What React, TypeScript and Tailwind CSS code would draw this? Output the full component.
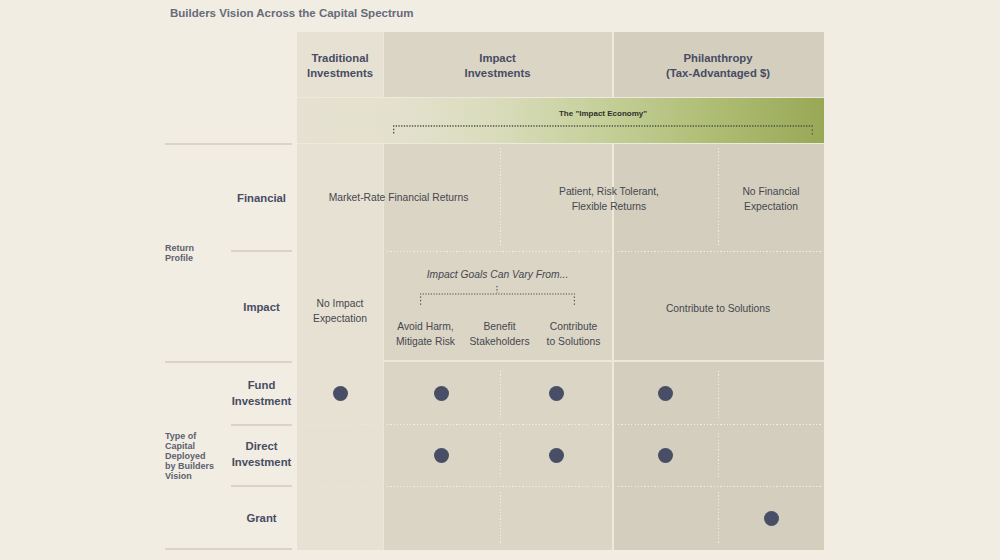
import React from "react";

// dotted rules used inside the chart body
const VDots: React.FC<{ className?: string }> = ({ className = "" }) => (
  <div
    className={`w-px justify-self-start bg-[repeating-linear-gradient(to_bottom,#f3efe5_0,#f3efe5_1.2px,transparent_1.2px,transparent_3.3px)] ${className}`}
  />
);

const HDots: React.FC<{ className?: string }> = ({ className = "" }) => (
  <div
    className={`h-px self-start bg-[repeating-linear-gradient(to_right,#f3efe5_0,#f3efe5_1.2px,transparent_1.2px,transparent_3.3px)] ${className}`}
  />
);

const Dot: React.FC<{ className?: string }> = ({ className = "" }) => (
  <div className={`flex items-center justify-center ${className}`}>
    <div className="h-[15px] w-[15px] rounded-full bg-[#484e66]" />
  </div>
);

const HeaderCell: React.FC<{ className?: string; children: React.ReactNode }> = ({
  className = "",
  children,
}) => (
  <div
    className={`row-start-1 flex items-center justify-center pt-[3px] text-center text-[11.3px] font-bold leading-[15px] text-[#474c63] ${className}`}
  >
    <div>{children}</div>
  </div>
);

const BodyText: React.FC<{ className?: string; children: React.ReactNode }> = ({
  className = "",
  children,
}) => (
  <div
    className={`flex items-center justify-center text-center text-[10.3px] leading-[15px] text-[#45474f] ${className}`}
  >
    <div>{children}</div>
  </div>
);

const RowLabel: React.FC<{ className?: string; children: React.ReactNode }> = ({
  className = "",
  children,
}) => (
  <div
    className={`flex items-center justify-center whitespace-nowrap text-center text-[11.3px] font-bold leading-[16px] text-[#474c63] ${className}`}
  >
    <div>{children}</div>
  </div>
);

const GroupLabel: React.FC<{ children: React.ReactNode }> = ({ children }) => (
  <div className="flex w-[66px] items-center text-[9px] font-bold leading-[10px] text-[#5c606f]">
    <div>{children}</div>
  </div>
);

const LeftLabels: React.FC = () => (
  <div className="mr-[5px] w-[127px] shrink-0">
    <div className="h-[111px]" />
    <div className="flex h-[218px] border-t-2 border-[#d9d4c6]">
      <GroupLabel>
        Return
        <br />
        Profile
      </GroupLabel>
      <div className="flex w-[61px] flex-col">
        <RowLabel className="h-[105px]">Financial</RowLabel>
        <RowLabel className="h-[111px] border-t-2 border-[#d9d4c6]">Impact</RowLabel>
      </div>
    </div>
    <div className="flex h-[189px] border-y-2 border-[#d9d4c6]">
      <GroupLabel>
        Type of
        <br />
        Capital
        <br />
        Deployed
        <br />
        by Builders
        <br />
        Vision
      </GroupLabel>
      <div className="flex w-[61px] flex-col">
        <RowLabel className="h-[61px] pb-[2px]">
          Fund
          <br />
          Investment
        </RowLabel>
        <RowLabel className="h-[61px] border-t-2 border-[#d9d4c6] pb-[3px]">
          Direct
          <br />
          Investment
        </RowLabel>
        <RowLabel className="h-[63px] border-t-2 border-[#d9d4c6]">Grant</RowLabel>
      </div>
    </div>
  </div>
);

const Chart: React.FC = () => (
  <div className="grid w-[527px] shrink-0 grid-cols-[86px_117px_112px_106px_106px] grid-rows-[65px_47px_107px_111px_62px_62px_64px]">
    {/* column fills */}
    <div className="col-start-1 col-end-2 row-start-1 row-end-8 bg-[#e6e1d3]" />
    <div className="col-start-2 col-end-4 row-start-1 row-end-8 border-l border-[#ece7da] bg-[#dbd5c6]" />
    <div className="col-start-4 col-end-6 row-start-1 row-end-8 border-l-2 border-[#eee9dc] bg-[#d4cebe]" />

    {/* header */}
    <HeaderCell className="col-start-1 col-end-2">
      Traditional
      <br />
      Investments
    </HeaderCell>
    <HeaderCell className="col-start-2 col-end-4">
      Impact
      <br />
      Investments
    </HeaderCell>
    <HeaderCell className="col-start-4 col-end-6">
      Philanthropy
      <br />
      (Tax-Advantaged $)
    </HeaderCell>

    {/* impact economy band */}
    <div className="col-start-1 col-end-6 row-start-2 border-y border-[#eee9dc] bg-[linear-gradient(to_right,#e6e1d1_0%,#e3e1cd_20%,#d9dcbb_38%,#c6d09b_57%,#adbc72_80%,#98a856_100%)] pl-[96px] pr-[11px] pt-[11px]">
      <div className="text-center text-[8px] font-bold leading-[10px] text-[#2f322b]">
        The "Impact Economy"
      </div>
      <svg width="420" height="14" className="mt-[3px] block">
        <g stroke="#4a4f42" strokeWidth="1.3" fill="none">
          <line x1="0" y1="4" x2="420" y2="4" strokeDasharray="1.3 1.4" />
          <line x1="0.7" y1="6.8" x2="0.7" y2="13" strokeDasharray="1.4 1.9" />
          <line x1="419.3" y1="7.4" x2="419.3" y2="13" strokeDasharray="1.4 2.4" />
        </g>
      </svg>
    </div>

    {/* financial row */}
    <BodyText className="col-start-1 col-end-3 row-start-3">Market-Rate Financial Returns</BodyText>
    <VDots className="col-start-3 row-start-3 my-[4px]" />
    <BodyText className="col-start-3 col-end-5 row-start-3 pt-[3px]">
      Patient, Risk Tolerant,
      <br />
      Flexible Returns
    </BodyText>
    <VDots className="col-start-5 row-start-3 my-[4px]" />
    <BodyText className="col-start-5 col-end-6 row-start-3 pt-[2px]">
      No Financial
      <br />
      Expectation
    </BodyText>

    {/* impact row */}
    <HDots className="col-start-2 col-end-4 row-start-4 ml-[4px] mr-[3px]" />
    <HDots className="col-start-4 col-end-6 row-start-4 ml-[6px] mr-[3px]" />
    <BodyText className="col-start-1 col-end-2 row-start-4 pt-[8px]">
      No Impact
      <br />
      Expectation
    </BodyText>
    <div className="col-start-2 col-end-4 row-start-4 flex flex-col items-center pt-[17px] text-[10.3px] text-[#45474f]">
      <div className="italic leading-[14px]">Impact Goals Can Vary From...</div>
      <svg width="155" height="22" className="mt-[3px] block">
        <g stroke="#4a4c55" strokeWidth="1.2" fill="none">
          <line x1="0" y1="9" x2="155" y2="9" strokeDasharray="1.2 1.5" />
          <line x1="77" y1="1" x2="77" y2="8" strokeDasharray="1.3 2" />
          <line x1="0.6" y1="11.5" x2="0.6" y2="20" strokeDasharray="1.3 2.2" />
          <line x1="154.4" y1="11.5" x2="154.4" y2="20" strokeDasharray="1.3 2.2" />
        </g>
      </svg>
      <div className="mt-[12px] flex pl-[4px] text-center leading-[15px]">
        <div className="w-[74px]">
          Avoid Harm,
          <br />
          Mitigate Risk
        </div>
        <div className="w-[74px]">
          Benefit
          <br />
          Stakeholders
        </div>
        <div className="w-[74px]">
          Contribute
          <br />
          to Solutions
        </div>
      </div>
    </div>
    <BodyText className="col-start-4 col-end-6 row-start-4 pt-[3px]">Contribute to Solutions</BodyText>
    <div className="col-start-2 col-end-6 row-start-4 h-[2px] self-end bg-[#ece7da]" />

    {/* capital rows */}
    <HDots className="col-start-1 col-end-2 row-start-6 mx-[4px] opacity-40" />
    <HDots className="col-start-2 col-end-4 row-start-6 ml-[4px] mr-[3px]" />
    <HDots className="col-start-4 col-end-6 row-start-6 ml-[6px] mr-[3px]" />
    <HDots className="col-start-1 col-end-2 row-start-7 mx-[4px] opacity-40" />
    <HDots className="col-start-2 col-end-4 row-start-7 ml-[4px] mr-[3px]" />
    <HDots className="col-start-4 col-end-6 row-start-7 ml-[6px] mr-[3px]" />

    <VDots className="col-start-3 row-start-5 mt-[9px] mb-[6px]" />
    <VDots className="col-start-3 row-start-6 mt-[9px] mb-[7px]" />
    <VDots className="col-start-3 row-start-7 mt-[6px] mb-[7px]" />
    <VDots className="col-start-5 row-start-5 mt-[9px] mb-[6px]" />
    <VDots className="col-start-5 row-start-6 mt-[9px] mb-[7px]" />
    <VDots className="col-start-5 row-start-7 mt-[6px] mb-[7px]" />

    <Dot className="col-start-1 row-start-5" />
    <Dot className="col-start-2 row-start-5" />
    <Dot className="col-start-3 row-start-5" />
    <Dot className="col-start-4 row-start-5" />
    <Dot className="col-start-2 row-start-6" />
    <Dot className="col-start-3 row-start-6" />
    <Dot className="col-start-4 row-start-6" />
    <Dot className="col-start-5 row-start-7" />
  </div>
);

export default function App() {
  return (
    <div className="h-[560px] w-[1000px] overflow-hidden bg-[#f1ede2] font-['Liberation_Sans',Arial,sans-serif]">
      <div className="h-[32px] pl-[170px] pt-[6px] text-[11.5px] font-bold leading-[14px] text-[#676b7a]">
        Builders Vision Across the Capital Spectrum
      </div>
      <div className="flex pl-[165px]">
        <LeftLabels />
        <Chart />
      </div>
    </div>
  );
}
